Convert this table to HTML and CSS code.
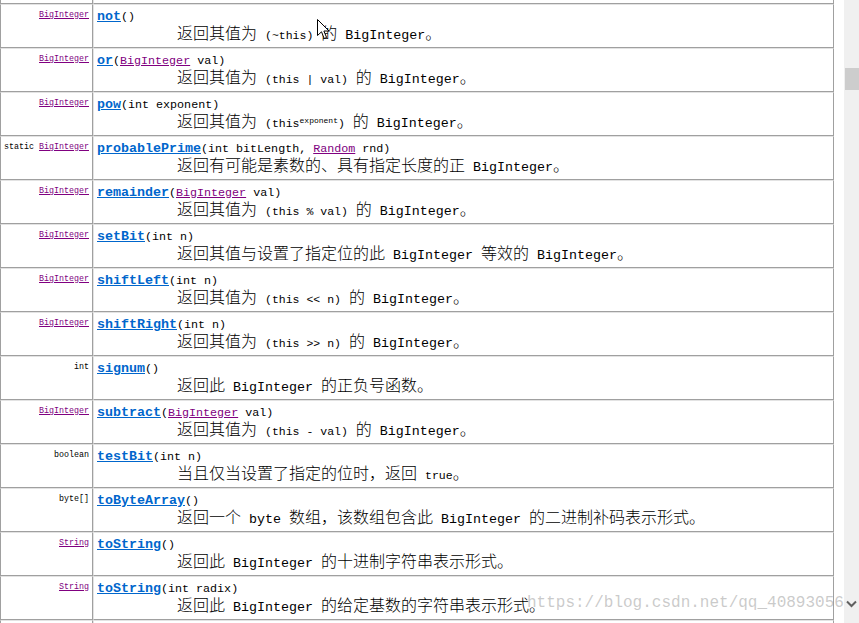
FILE: index.html
```html
<!DOCTYPE html>
<html>
<head>
<meta charset="utf-8">
<link rel="stylesheet" href="styles.css">
</head>
<body>
<div class="screen">
  <div class="page">
    <div class="table">
      <div class="row">
        <div class="type"></div>
        <div class="main"></div>
      </div>
      <div class="row">
        <div class="type"><a class="tl">BigInteger</a></div>
        <div class="main">
          <div class="sig"><a class="name">not</a>()</div>
          <div class="desc">返回其值为<span class="l"> <code>(~this)</code> </span>的<span class="l"> BigInteger</span>。</div>
        </div>
      </div>
      <div class="row">
        <div class="type"><a class="tl">BigInteger</a></div>
        <div class="main">
          <div class="sig"><a class="name">or</a>(<a class="pl">BigInteger</a> val)</div>
          <div class="desc">返回其值为<span class="l"> <code>(this | val)</code> </span>的<span class="l"> BigInteger</span>。</div>
        </div>
      </div>
      <div class="row">
        <div class="type"><a class="tl">BigInteger</a></div>
        <div class="main">
          <div class="sig"><a class="name">pow</a>(int exponent)</div>
          <div class="desc">返回其值为<span class="l"> <code>(this<sup>exponent</sup>)</code> </span>的<span class="l"> BigInteger</span>。</div>
        </div>
      </div>
      <div class="row">
        <div class="type"><span class="kw">static </span><a class="tl">BigInteger</a></div>
        <div class="main">
          <div class="sig"><a class="name">probablePrime</a>(int bitLength, <a class="pl">Random</a> rnd)</div>
          <div class="desc">返回有可能是素数的、具有指定长度的正<span class="l"> BigInteger</span>。</div>
        </div>
      </div>
      <div class="row">
        <div class="type"><a class="tl">BigInteger</a></div>
        <div class="main">
          <div class="sig"><a class="name">remainder</a>(<a class="pl">BigInteger</a> val)</div>
          <div class="desc">返回其值为<span class="l"> <code>(this % val)</code> </span>的<span class="l"> BigInteger</span>。</div>
        </div>
      </div>
      <div class="row">
        <div class="type"><a class="tl">BigInteger</a></div>
        <div class="main">
          <div class="sig"><a class="name">setBit</a>(int n)</div>
          <div class="desc">返回其值与设置了指定位的此<span class="l"> BigInteger </span>等效的<span class="l"> BigInteger</span>。</div>
        </div>
      </div>
      <div class="row">
        <div class="type"><a class="tl">BigInteger</a></div>
        <div class="main">
          <div class="sig"><a class="name">shiftLeft</a>(int n)</div>
          <div class="desc">返回其值为<span class="l"> <code>(this &lt;&lt; n)</code> </span>的<span class="l"> BigInteger</span>。</div>
        </div>
      </div>
      <div class="row">
        <div class="type"><a class="tl">BigInteger</a></div>
        <div class="main">
          <div class="sig"><a class="name">shiftRight</a>(int n)</div>
          <div class="desc">返回其值为<span class="l"> <code>(this &gt;&gt; n)</code> </span>的<span class="l"> BigInteger</span>。</div>
        </div>
      </div>
      <div class="row">
        <div class="type"><span class="kw">int</span></div>
        <div class="main">
          <div class="sig"><a class="name">signum</a>()</div>
          <div class="desc">返回此<span class="l"> BigInteger </span>的正负号函数。</div>
        </div>
      </div>
      <div class="row">
        <div class="type"><a class="tl">BigInteger</a></div>
        <div class="main">
          <div class="sig"><a class="name">subtract</a>(<a class="pl">BigInteger</a> val)</div>
          <div class="desc">返回其值为<span class="l"> <code>(this - val)</code> </span>的<span class="l"> BigInteger</span>。</div>
        </div>
      </div>
      <div class="row">
        <div class="type"><span class="kw">boolean</span></div>
        <div class="main">
          <div class="sig"><a class="name">testBit</a>(int n)</div>
          <div class="desc">当且仅当设置了指定的位时，返回<span class="l"> <code>true</code></span>。</div>
        </div>
      </div>
      <div class="row">
        <div class="type"><span class="kw">byte[]</span></div>
        <div class="main">
          <div class="sig"><a class="name">toByteArray</a>()</div>
          <div class="desc">返回一个<span class="l"> byte </span>数组，该数组包含此<span class="l"> BigInteger </span>的二进制补码表示形式。</div>
        </div>
      </div>
      <div class="row">
        <div class="type"><a class="tl">String</a></div>
        <div class="main">
          <div class="sig"><a class="name">toString</a>()</div>
          <div class="desc">返回此<span class="l"> BigInteger </span>的十进制字符串表示形式。</div>
        </div>
      </div>
      <div class="row">
        <div class="type"><a class="tl">String</a></div>
        <div class="main">
          <div class="sig"><a class="name">toString</a>(int radix)</div>
          <div class="desc">返回此<span class="l"> BigInteger </span>的给定基数的字符串表示形式。</div>
        </div>
      </div>
      <div class="row">
        <div class="type"></div>
        <div class="main"></div>
      </div>
    </div>
  </div>
  <div class="scrollbar">
    <div class="thumb"></div>
    <svg class="arrow" width="11" height="8" viewBox="0 0 11 8"><path d="M1 1.5 L5.5 6 L10 1.5" fill="none" stroke="#606060" stroke-width="2"/></svg>
  </div>
  <div class="watermark">https://blog.csdn.net/qq_40893056</div>
  <svg class="cursor" width="13" height="21" viewBox="0 0 13 21"><path d="M0.5 0.5 L0.5 16.5 L4.5 12.8 L7.2 19.5 L9.6 18.5 L6.9 12 L12 12 Z" fill="#fff" stroke="#000" stroke-width="1"/></svg>
</div>
</body>
</html>
```
FILE: styles.css
```css
html, body {
  margin: 0;
  padding: 0;
  background: #fff;
  overflow: hidden;
}
.screen {
  position: relative;
  display: flex;
  height: 623px;
  width: 859px;
  overflow: hidden;
}
.page {
  width: 844px;
  overflow: hidden;
}
.table {
  width: 834px;
  margin-top: -40px;
}
.row {
  display: flex;
  height: 44px;
}
.type {
  width: 93px;
  box-sizing: border-box;
  border-left: 1px solid #a0a0a0;
  border-right: 1px solid #a0a0a0;
  border-top: 1px solid #e3e3e3;
  border-bottom: 1px solid #a0a0a0;
  padding: 3px 3px 0 3px;
  text-align: right;
  font: 8.33px/14px "Liberation Mono", monospace;
  color: #000;
  white-space: nowrap;
}
.tl {
  color: #800080;
  text-decoration: underline;
}
.main {
  flex: 1;
  box-sizing: border-box;
  border-left: 1px solid #e3e3e3;
  border-right: 1px solid #a0a0a0;
  border-top: 1px solid #e3e3e3;
  border-bottom: 1px solid #a0a0a0;
  padding: 4px 3px 0 3px;
  overflow: hidden;
}
.sig {
  font: 11.7px/15px "Liberation Mono", monospace;
  color: #000;
  white-space: nowrap;
}
.name {
  font-weight: bold;
  font-size: 13.33px;
  color: #0066cc;
  text-decoration: underline;
}
.pl {
  color: #800080;
  text-decoration: underline;
}
.desc {
  padding-left: 80px;
  font: 300 16px/14px "Noto Sans CJK SC", sans-serif;
  color: #000;
  white-space: nowrap;
}
.desc .l {
  font: 13.33px "Liberation Mono", monospace;
  white-space: pre;
}
.desc code {
  font: 11.5px "Liberation Mono", monospace;
}
.desc sup {
  font-size: 8px;
  vertical-align: 4px;
  line-height: 0;
}
.scrollbar {
  width: 15px;
  background: #f0f0f0;
  display: flex;
  flex-direction: column;
  align-items: flex-end;
}
.thumb {
  margin-top: 68px;
  width: 14px;
  height: 22px;
  background: #cdcdcd;
}
.arrow {
  margin-top: auto;
  margin-bottom: 15px;
  margin-right: 2px;
}
.watermark {
  position: absolute;
  left: 527px;
  top: 593px;
  font: 16px/20px "Liberation Mono", monospace;
  color: rgba(150, 150, 150, 0.5);
  white-space: nowrap;
  pointer-events: none;
}
.cursor {
  position: absolute;
  left: 317px;
  top: 19px;
}
```
